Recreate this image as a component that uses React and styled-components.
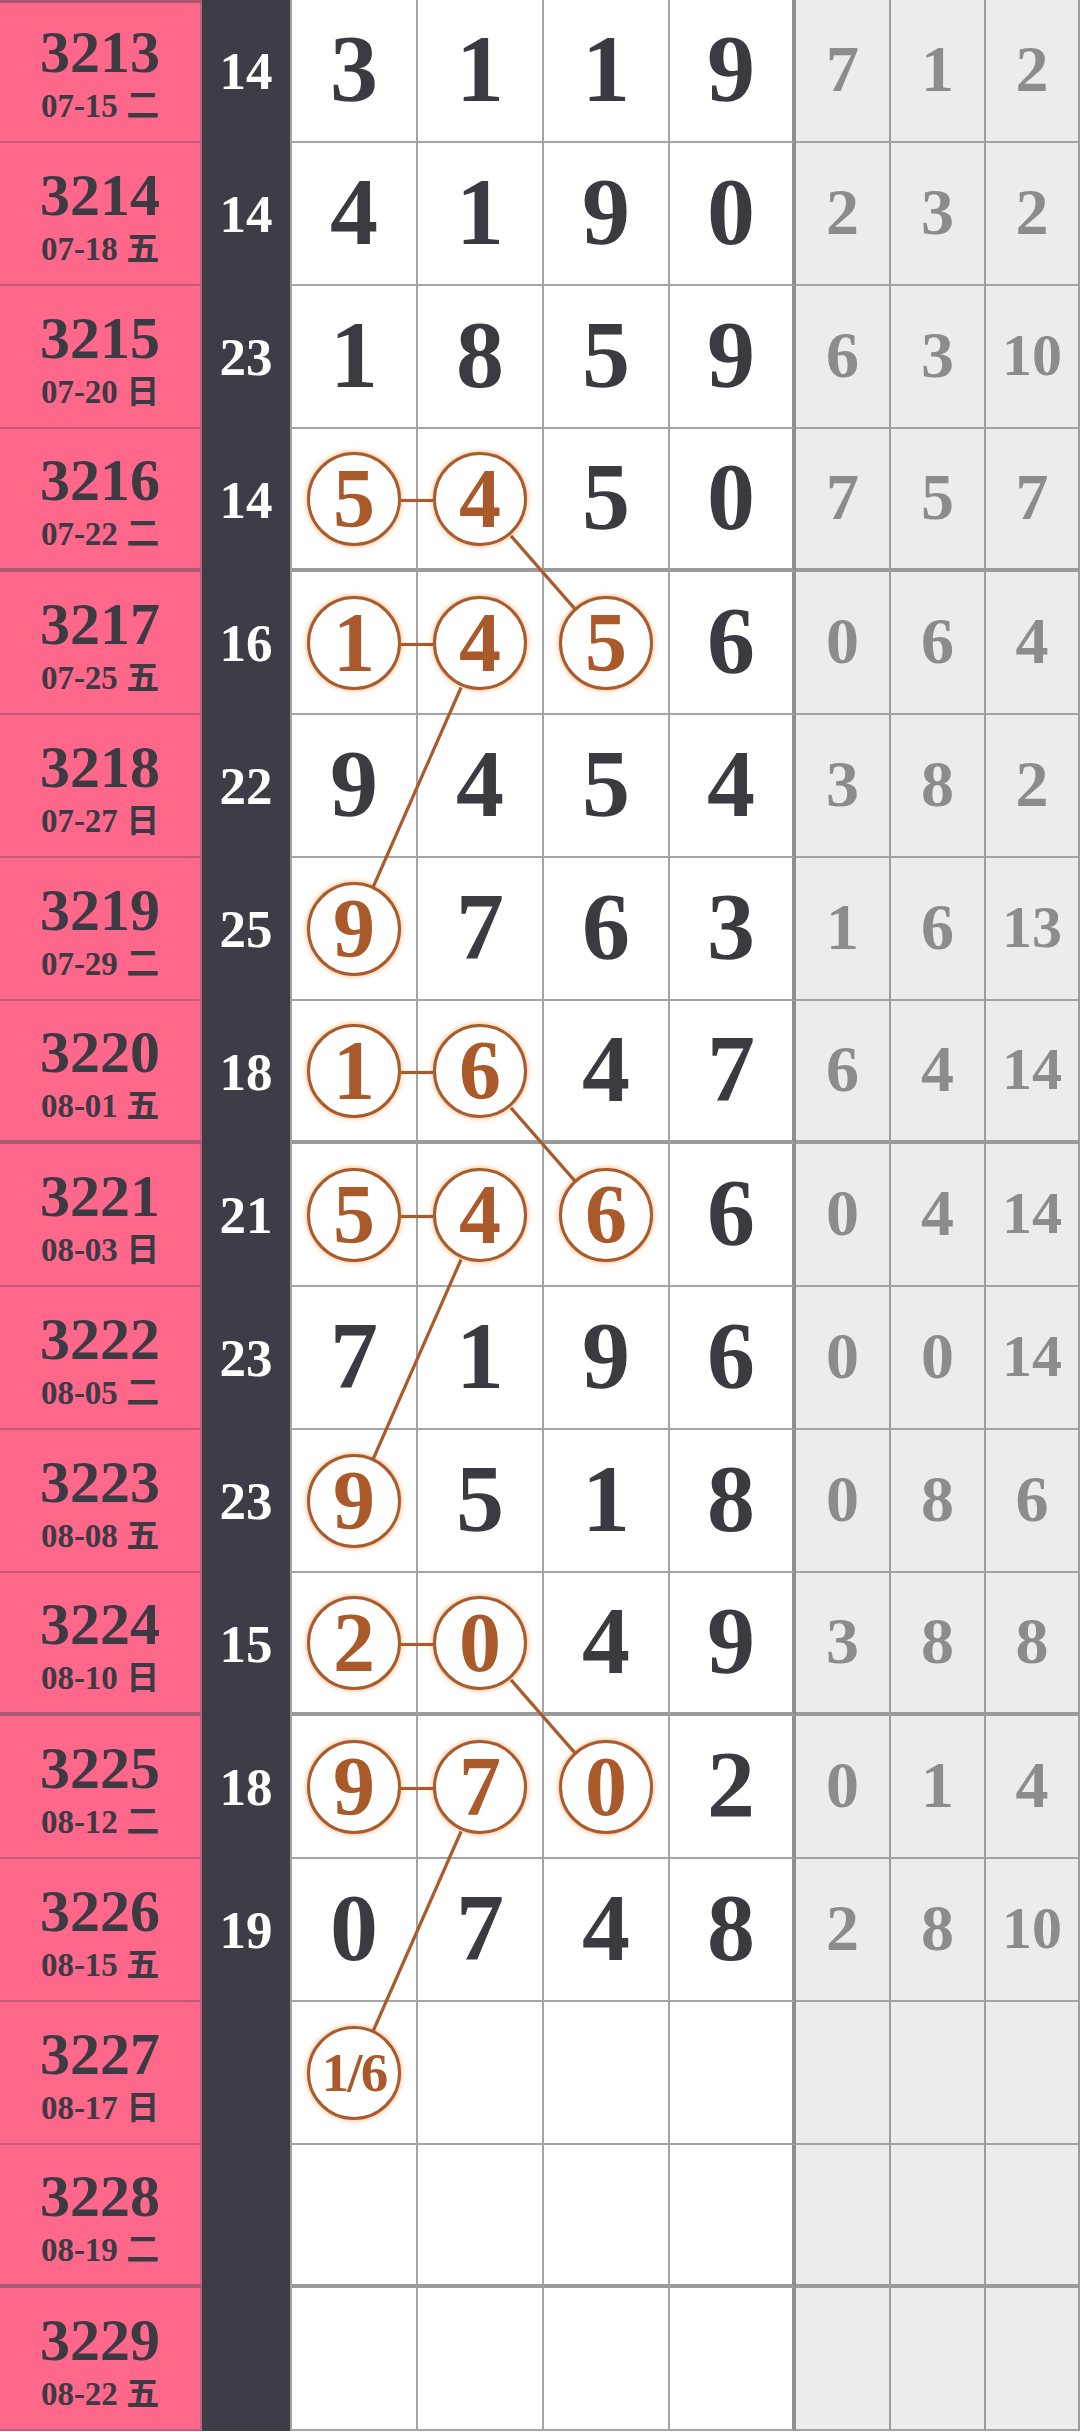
import React from "react";
import styled, { createGlobalStyle } from "styled-components";

const ROW_H = 143;
const COL_W = [202, 90, 126, 126, 126, 126, 95, 95, 94];
const BALL_R = 47;

const rows = [
    { no: 3213, date: "07-15", wd: "二", sum: 14, digits: [3, 1, 1, 9], miss: [7, 1, 2] },
    { no: 3214, date: "07-18", wd: "五", sum: 14, digits: [4, 1, 9, 0], miss: [2, 3, 2] },
    { no: 3215, date: "07-20", wd: "日", sum: 23, digits: [1, 8, 5, 9], miss: [6, 3, 10] },
    { no: 3216, date: "07-22", wd: "二", sum: 14, digits: [5, 4, 5, 0], miss: [7, 5, 7], balls: [0, 1] },
    { no: 3217, date: "07-25", wd: "五", sum: 16, digits: [1, 4, 5, 6], miss: [0, 6, 4], balls: [0, 1, 2] },
    { no: 3218, date: "07-27", wd: "日", sum: 22, digits: [9, 4, 5, 4], miss: [3, 8, 2] },
    { no: 3219, date: "07-29", wd: "二", sum: 25, digits: [9, 7, 6, 3], miss: [1, 6, 13], balls: [0] },
    { no: 3220, date: "08-01", wd: "五", sum: 18, digits: [1, 6, 4, 7], miss: [6, 4, 14], balls: [0, 1] },
    { no: 3221, date: "08-03", wd: "日", sum: 21, digits: [5, 4, 6, 6], miss: [0, 4, 14], balls: [0, 1, 2] },
    { no: 3222, date: "08-05", wd: "二", sum: 23, digits: [7, 1, 9, 6], miss: [0, 0, 14] },
    { no: 3223, date: "08-08", wd: "五", sum: 23, digits: [9, 5, 1, 8], miss: [0, 8, 6], balls: [0] },
    { no: 3224, date: "08-10", wd: "日", sum: 15, digits: [2, 0, 4, 9], miss: [3, 8, 8], balls: [0, 1] },
    { no: 3225, date: "08-12", wd: "二", sum: 18, digits: [9, 7, 0, 2], miss: [0, 1, 4], balls: [0, 1, 2] },
    { no: 3226, date: "08-15", wd: "五", sum: 19, digits: [0, 7, 4, 8], miss: [2, 8, 10] },
    { no: 3227, date: "08-17", wd: "日", sum: "", digits: ["1/6", "", "", ""], miss: ["", "", ""], balls: [0] },
    { no: 3228, date: "08-19", wd: "二", sum: "", digits: ["", "", "", ""], miss: ["", "", ""] },
    { no: 3229, date: "08-22", wd: "五", sum: "", digits: ["", "", "", ""], miss: ["", "", ""] },
];

// ball links: [fromCol, fromRow, toCol, toRow]
const links = [
    [0, 3, 1, 3], [1, 3, 2, 4],
    [0, 4, 1, 4], [1, 4, 0, 6],
    [0, 7, 1, 7], [1, 7, 2, 8],
    [0, 8, 1, 8], [1, 8, 0, 10],
    [0, 11, 1, 11], [1, 11, 2, 12],
    [0, 12, 1, 12], [1, 12, 0, 14],
];

// every fourth draw closes a block (3216, 3220, 3224, 3228)
const isGroupEnd = i => i % 4 === 3;

const ballCenter = (col, row) => {
    const left = COL_W.slice(0, 2 + col).reduce((a, b) => a + b, 0);
    const border = isGroupEnd(row) ? 4 : 2;
    return [left + (COL_W[2 + col] - 2) / 2, row * ROW_H + (ROW_H - border) / 2 + 2];
};

const App = () => {
    return (
    <>
        <GlobalStyle />
        <Board>
            {rows.map((row, i) => {
                const groupEnd = isGroupEnd(i);
                return (
                <Row key={row.no}>
                    <IssueCell $groupEnd={groupEnd} $first={i === 0}>
                        <IssueNo>{row.no}</IssueNo>
                        <IssueDate>{row.date} {row.wd}</IssueDate>
                    </IssueCell>
                    <SumCell>{row.sum}</SumCell>
                    {row.digits.map((d, c) => (
                        <DigitCell key={c} $groupEnd={groupEnd} $last={c === 3}>
                            {row.balls && row.balls.includes(c)
                                ? <Ball $small={String(d).length > 1}>{d}</Ball>
                                : d}
                        </DigitCell>
                    ))}
                    {row.miss.map((m, c) => (
                        <MissCell key={c} $groupEnd={groupEnd} $small={String(m).length > 1}>
                            {m}
                        </MissCell>
                    ))}
                </Row>
                );
            })}

            <LinkLayer width="1080" height={rows.length * ROW_H}>
                {links.map(([c1, r1, c2, r2], idx) => {
                    const [x1, y1] = ballCenter(c1, r1);
                    const [x2, y2] = ballCenter(c2, r2);
                    const len = Math.hypot(x2 - x1, y2 - y1);
                    const ux = (x2 - x1) / len;
                    const uy = (y2 - y1) / len;
                    return (
                    <line
                        key={idx}
                        x1={x1 + ux * BALL_R}
                        y1={y1 + uy * BALL_R}
                        x2={x2 - ux * BALL_R}
                        y2={y2 - uy * BALL_R}
                        stroke="#a95b2c"
                        strokeWidth="3.2"
                    />
                    );
                })}
            </LinkLayer>
        </Board>
    </>
    );
}

const GlobalStyle = createGlobalStyle`
    html, body {
        margin: 0;
        padding: 0;
        background: #ffffff;
    }
`;

const Board = styled.div`
    position: relative;
    width: 1080px;
    font-family: "Liberation Serif", "Noto Sans CJK SC", serif;
    font-weight: 700;
`;

const Row = styled.div`
    display: grid;
    grid-template-columns: ${COL_W.map(w => `${w}px`).join(" ")};
    height: ${ROW_H}px;
`;

const IssueCell = styled.div`
    box-sizing: border-box;
    display: flex;
    flex-direction: column;
    align-items: center;
    justify-content: center;
    gap: 8px;
    padding-top: ${p => (p.$first ? "0" : "3px")};
    background: #ff678b;
    color: #3c3a42;
    border-right: 2px solid #b9657d;
    border-top: ${p => (p.$first ? "3px solid #a8596d" : "none")};
    border-bottom: ${p => (p.$groupEnd ? "4px solid #aa5a70" : "2px solid #c15b77")};
`;

const IssueNo = styled.span`
    font-size: 60px;
    line-height: 1;
`;

const IssueDate = styled.span`
    font-size: 33px;
    line-height: 1;
    white-space: nowrap;
`;

const SumCell = styled.div`
    box-sizing: border-box;
    display: flex;
    align-items: center;
    justify-content: center;
    background: #3e3d47;
    color: #ffffff;
    font-size: 53px;
    line-height: 1;
    border-right: 2px solid #a2a2a2;
`;

const DigitCell = styled.div`
    box-sizing: border-box;
    display: flex;
    align-items: center;
    justify-content: center;
    padding-bottom: 4px;
    background: #ffffff;
    color: #3b3a41;
    font-size: 96px;
    line-height: 1;
    border-right: ${p => (p.$last ? "4px solid #8e8e8e" : "2px solid #a4a4a4")};
    border-bottom: ${p => (p.$groupEnd ? "4px solid #9a9a9a" : "2px solid #a4a4a4")};
`;

const Ball = styled.span`
    box-sizing: border-box;
    width: ${BALL_R * 2}px;
    height: ${BALL_R * 2}px;
    margin-top: 4px;
    border-radius: 50%;
    border: 3.5px solid #a95b2c;
    background: #ffffff;
    box-shadow: 0 0 4px 1px rgba(246, 166, 110, 0.7);
    display: flex;
    align-items: center;
    justify-content: center;
    color: #a9592a;
    font-size: ${p => (p.$small ? "55px" : "84px")};
    line-height: 1;
    letter-spacing: ${p => (p.$small ? "-2px" : "0")};
`;

const MissCell = styled.div`
    box-sizing: border-box;
    display: flex;
    align-items: center;
    justify-content: center;
    padding-bottom: 3px;
    background: #ececec;
    color: #8c8c8c;
    font-size: ${p => (p.$small ? "60px" : "66px")};
    line-height: 1;
    border-right: 2px solid #9c9c9c;
    border-bottom: ${p => (p.$groupEnd ? "4px solid #9a9a9a" : "2px solid #a4a4a4")};
`;

const LinkLayer = styled.svg`
    position: absolute;
    top: 0;
    left: 0;
    pointer-events: none;
`;

export default App;
